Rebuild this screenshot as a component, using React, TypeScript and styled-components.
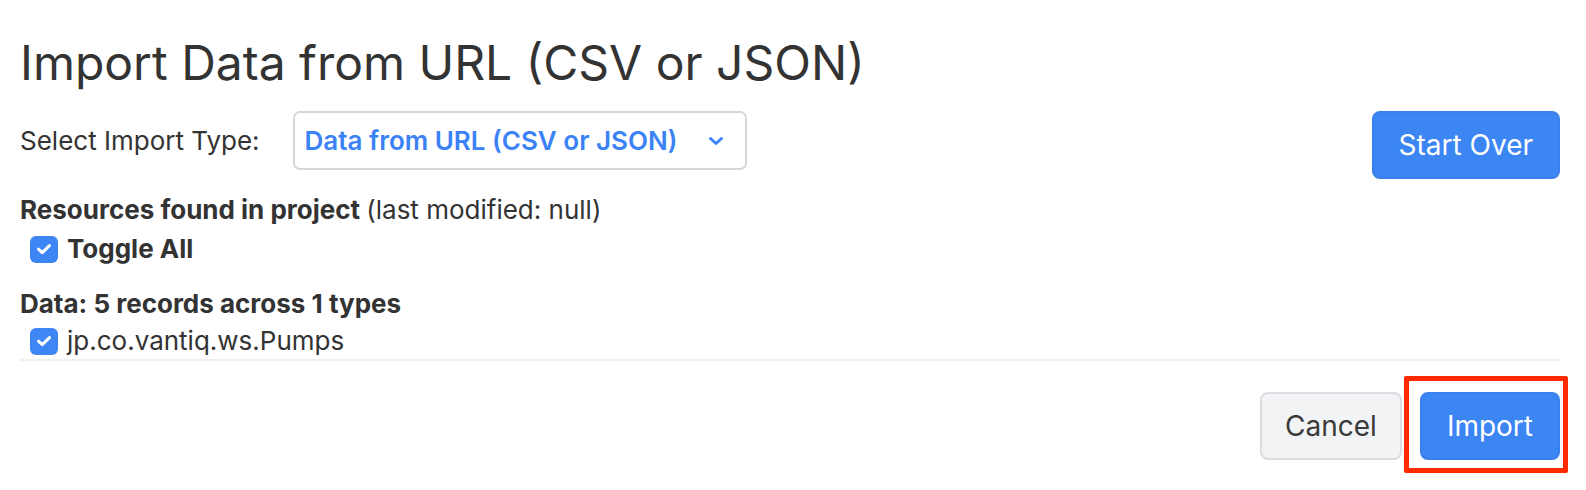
import React from "react";
import styled, { createGlobalStyle } from "styled-components";

const Global = createGlobalStyle`
  html, body { margin: 0; padding: 0; background: #ffffff; }
  body { font-family: Inter, "Noto Sans", sans-serif; color: #333333; }
  * { box-sizing: border-box; }
`;

const Page = styled.div`
  min-height: 490px;
  padding: 34px 26px 30px 20px;
  display: flex;
  flex-direction: column;
`;

const Title = styled.h1`
  margin: 0;
  font-size: 48px;
  line-height: 58px;
  font-weight: 400;
  color: #333333;
`;

const TopRow = styled.div`
  margin-top: 19px;
  display: flex;
  align-items: flex-start;
  justify-content: space-between;
`;

const SelectGroup = styled.div`
  display: flex;
  align-items: center;
  gap: 33px;
`;

const Label = styled.span`
  font-size: 26px;
  line-height: 32px;
  color: #333333;
`;

const SelectBox = styled.div`
  width: 454px;
  height: 59px;
  border: 2px solid #d4d6da;
  border-radius: 7px;
  display: flex;
  align-items: center;
  justify-content: space-between;
  padding: 0 21px 0 10px;
  color: #3b82f6;
  font-size: 26px;
  font-weight: 600;
`;

const Button = styled.button<{ $variant?: "primary" | "secondary" }>`
  height: 68px;
  border-radius: 8px;
  font-family: Inter, "Noto Sans", sans-serif;
  font-size: 28px;
  font-weight: 400;
  padding: 0 ${(p) => (p.$variant === "secondary" ? 23 : 25)}px;
  cursor: pointer;
  border: 2px solid ${(p) => (p.$variant === "secondary" ? "#dcdde0" : "#3a80e8")};
  background: ${(p) => (p.$variant === "secondary" ? "#f2f3f5" : "#3b86f3")};
  color: ${(p) => (p.$variant === "secondary" ? "#3a3a3a" : "#ffffff")};
`;

const SectionTitle = styled.div<{ $top: number }>`
  margin-top: ${(p) => p.$top}px;
  font-size: 26px;
  line-height: 32px;
  font-weight: 700;
  color: #333333;
`;

const Muted = styled.span`
  font-weight: 400;
`;

const CheckRow = styled.label<{ $top: number; $bold?: boolean }>`
  margin-top: ${(p) => p.$top}px;
  padding-left: 10px;
  display: flex;
  align-items: center;
  gap: 9px;
  font-size: 26px;
  line-height: 32px;
  font-weight: ${(p) => (p.$bold ? 700 : 400)};
  color: #333333;
`;

const Box = styled.span`
  width: 28px;
  height: 27px;
  border-radius: 6px;
  background: #3d86f4;
  display: inline-flex;
  align-items: center;
  justify-content: center;
  flex: none;
`;

const Divider = styled.div`
  margin-top: 2px;
  height: 2px;
  background: #f0f0f0;
`;

const Footer = styled.div`
  margin-top: 31px;
  display: flex;
  align-items: flex-start;
  justify-content: flex-end;
  gap: 18px;
`;

const Highlight = styled.div`
  position: relative;
  display: flex;
  height: 68px;
`;

const RedFrame = styled.span`
  position: absolute;
  left: -16px;
  right: -8px;
  top: -16px;
  height: 97px;
  border: 5px solid #ff2a00;
  border-radius: 2px;
  pointer-events: none;
`;

const Check = () => (
  <svg width="16" height="12" viewBox="0 0 16 12">
    <path d="M2.5 6.2 L6.2 9.6 L13.5 2.6" fill="none" stroke="#ffffff" strokeWidth="3" strokeLinecap="round" strokeLinejoin="round" />
  </svg>
);

const Chevron = () => (
  <svg width="16" height="10" viewBox="0 0 16 10">
    <path d="M2.5 2.5 L8 7.5 L13.5 2.5" fill="none" stroke="#3b82f6" strokeWidth="3" strokeLinecap="round" strokeLinejoin="round" />
  </svg>
);

export default function App() {
  return (
    <>
      <Global />
      <Page>
        <Title>Import Data from URL (CSV or JSON)</Title>
        <TopRow>
          <SelectGroup>
            <Label>Select Import Type:</Label>
            <SelectBox>
              <span>Data from URL (CSV or JSON)</span>
              <Chevron />
            </SelectBox>
          </SelectGroup>
          <Button>Start Over</Button>
        </TopRow>
        <SectionTitle $top={15}>
          Resources found in project <Muted>(last modified: null)</Muted>
        </SectionTitle>
        <CheckRow $top={7} $bold>
          <Box><Check /></Box>
          Toggle All
        </CheckRow>
        <SectionTitle $top={23}>Data: 5 records across 1 types</SectionTitle>
        <CheckRow $top={5}>
          <Box><Check /></Box>
          jp.co.vantiq.ws.Pumps
        </CheckRow>
        <Divider />
        <Footer>
          <Button $variant="secondary">Cancel</Button>
          <Highlight>
            <Button>Import</Button>
            <RedFrame />
          </Highlight>
        </Footer>
      </Page>
    </>
  );
}
